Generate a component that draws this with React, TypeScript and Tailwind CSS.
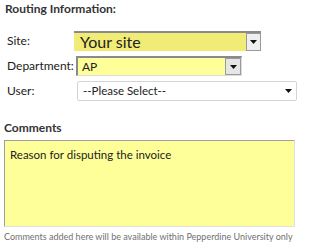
import React from "react";

const Arrow = () => (
  <svg width="7" height="4" viewBox="0 0 7 4" className="block">
    <path d="M0 0h7L3.5 4z" fill="#111" />
  </svg>
);

const App = () => {
  return (
    <div className="w-[309px] h-[252px] bg-white text-[#222] relative overflow-hidden" style={{ fontFamily: "Lato, 'Liberation Sans', sans-serif" }}>
      <div className="pl-[5px] pt-[1px] text-[12px] font-bold leading-[16px] text-[#333]">Routing Information:</div>

      <div className="mt-[14px] flex flex-col">
        <div className="flex items-center h-[20px]">
          <span className="w-[74px] pl-[7px] text-[12px]">Site:</span>
          <div className="flex h-[20px] w-[187px] border-t-2 border-[#8a8a8a]">
            <div className="flex-1 bg-[#f1ec75] text-[16px] leading-[18px] pl-[6px]">Your site</div>
            <div className="w-[15px] bg-[#efefef] border border-[#9a9a9a] flex items-center justify-center">
              <Arrow />
            </div>
          </div>
        </div>

        <div className="flex items-center h-[20px] mt-[5px]">
          <span className="w-[76px] pl-[7px] text-[12px]">Department:</span>
          <div className="flex h-[20px] w-[166px] border-t-2 border-l-2 border-[#8a8a8a] border-r border-b border-r-[#dcdcdc] border-b-[#dcdcdc]">
            <div className="flex-1 bg-[#ffff99] text-[12px] leading-[17px] pl-[4px]">AP</div>
            <div className="w-[16px] bg-[#e6e6e6] border border-[#9a9a9a] flex items-center justify-center">
              <Arrow />
            </div>
          </div>
        </div>

        <div className="flex items-center h-[20px] mt-[5px]">
          <span className="w-[77px] pl-[7px] text-[12px]">User:</span>
          <div className="flex items-center h-[20px] w-[220px] border border-[#d4d4d4] rounded-[2px] pl-[5px] pr-[4px]">
            <span className="flex-1 text-[11.5px]">--Please Select--</span>
            <Arrow />
          </div>
        </div>
      </div>

      <div className="mt-[19px] pl-[4px] text-[12px] font-bold leading-[16px] text-[#333]">Comments</div>
      <div className="mt-[4px] ml-[4px] w-[291px] h-[87px] bg-[#ffff99] border border-[#a0a0a0] border-r-[#e0e0e0] border-b-[#e0e0e0] px-[5px] pt-[6px] text-[11.5px] leading-[15px]">
        Reason for disputing the invoice
      </div>
      <div className="mt-[4px] pl-[4px] text-[9px] text-[#707070] leading-[12px] whitespace-nowrap">
        Comments added here will be available within Pepperdine University only
      </div>
    </div>
  );
};

export default App;
